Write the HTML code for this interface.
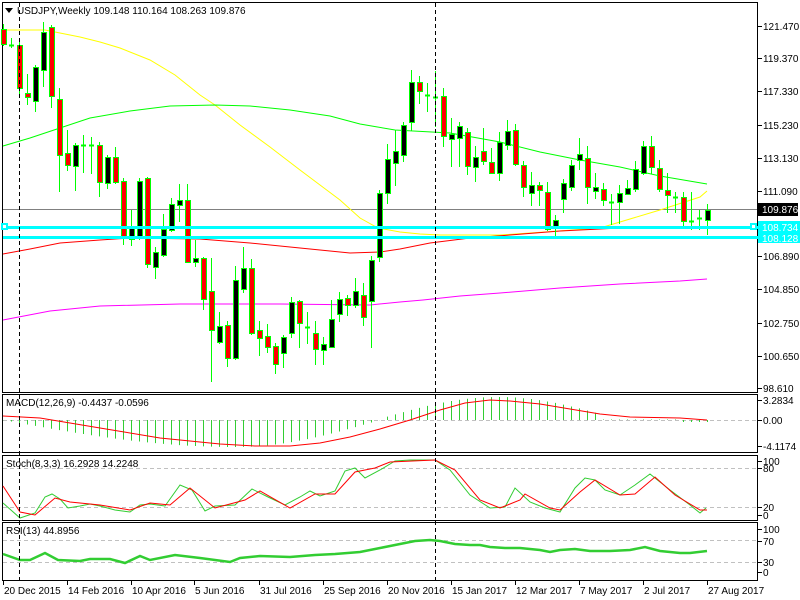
<!DOCTYPE html>
<html><head><meta charset="utf-8"><style>
body{margin:0;background:#fff;width:800px;height:600px;overflow:hidden}
svg{display:block;font-family:"Liberation Sans",sans-serif;font-size:10px}
</style></head><body>
<svg id="s" width="800" height="600" xmlns="http://www.w3.org/2000/svg">
<rect width="800" height="600" fill="#fff"/>
<g fill="none" stroke="#000" stroke-width="1">
<rect x="2.5" y="2.5" width="755" height="390"/>
<rect x="2.5" y="394.5" width="755" height="58"/>
<rect x="2.5" y="455.5" width="755" height="65"/>
<rect x="2.5" y="522.5" width="755" height="58"/>
</g>
<g id="g"></g>
<path d="M5 8h8l-4 5z" fill="#000"/>
<text x="17" y="14">USDJPY,Weekly  109.148 110.164 108.263 109.876</text>
<text x="6" y="406">MACD(12,26,9) -0.4437 -0.0596</text>
<text x="6" y="467">Stoch(8,3,3) 16.2928 14.2248</text>
<text x="6" y="534">RSI(13) 44.8956</text>
<g id="ax"></g>
<rect x="758" y="203" width="40" height="13" fill="#000"/>
<text x="762" y="213" fill="#fff">109.876</text>
<rect x="758" y="221" width="42" height="11" fill="#00ffff"/>
<rect x="758" y="232" width="42" height="11" fill="#00ffff"/>
<text x="762" y="231" fill="#fff">108.734</text>
<text x="762" y="242" fill="#fff">108.128</text>
</svg>
<script>
const NS="http://www.w3.org/2000/svg",g=document.getElementById('g'),ax=document.getElementById('ax');
function el(p,t,a,txt){const e=document.createElementNS(NS,t);for(const k in a)e.setAttribute(k,a[k]);if(txt)e.textContent=txt;p.appendChild(e);return e;}
function pl(pts,c,w,d){el(g,'polyline',{points:pts.map(p=>p.join(',')).join(' '),fill:'none',stroke:c,'stroke-width':w||1,'stroke-dasharray':d||''});}
pl([[3,209.5],[757,209.5]],'#808080',1);
[[420.5],[468.5],[507.5],[540.5],[562.5]].forEach(y=>pl([[3,y[0]],[757,y[0]]],'#c0c0c0',1,'4,3'));
pl([[3,30],[45,30],[55,32],[80,37],[100,42],[120,48],[150,60],[175,75],[200,95],[215,105],[240,125],[270,147],[300,170],[320,185],[340,200],[360,218],[378,228],[400,232],[420,234],[440,235],[500,235],[545,232],[600,228],[620,222],[660,210],[700,197],[707,191]],'#ffff00',1);
pl([[3,146],[30,138],[60,128],[90,118],[130,111],[170,106],[215,105],[250,106],[290,110],[330,116],[360,124],[395,130],[450,133],[500,142],[540,152],[580,160],[620,167],[660,176],[707,184]],'#00ff00',1);
pl([[3,254],[30,249],[60,243],[100,240],[130,238],[200,239],[250,243],[300,248],[350,253],[380,252],[400,249],[430,243],[470,238],[510,235],[560,231],[620,228],[640,227]],'#ff0000',1);
pl([[672,227],[706,227]],'#ff0000',1);
pl([[3,320],[50,311],[100,306],[180,304],[280,304],[370,305],[400,302],[423,300],[460,296],[500,293],[560,288],[620,284],[680,281],[707,279]],'#ff00ff',1);
const C=[[29,44,24,46,1],[45,47,38,48,0],[45,88,40,95,1],[93,97,74,105,1],[67,101,65,112,0],[32,70,22,87,0],[27,96,25,108,1],[99,155,88,192,1],[153,165,130,171,1],[145,166,143,191,0],[145,146,135,173,0],[145,147,137,174,1],[145,182,142,197,1],[157,183,155,189,0],[157,182,147,184,1],[181,236,178,245,1],[228,239,210,246,0],[181,236,178,240,0],[178,264,177,268,1],[252,267,247,279,0],[229,255,214,257,0],[204,230,198,232,0],[200,205,184,222,0],[200,262,184,263,1],[258,262,240,267,0],
[258,299,257,310,1],[291,330,258,382,1],[326,342,312,344,0],[325,358,321,367,1],[280,358,266,360,0],[268,289,247,293,0],[268,333,259,335,1],[330,338,321,356,1],[336,347,324,353,1],[346,364,343,374,1],[337,353,335,368,0],[302,333,297,338,0],[301,323,300,348,1],[327,329,312,344,1],[333,349,321,365,1],[344,350,337,365,0],[319,347,300,348,0],[299,314,292,322,0],[298,305,295,316,1],[291,305,278,308,0],[295,317,283,326,1],[260,301,256,348,0],
[193,257,190,262,0],[159,193,144,204,0],[151,163,130,186,0],[125,155,122,162,0],[82,122,70,131,0],[82,91,76,104,1],[95,96,83,112,0],[97,99,71,127,0],[96,136,88,147,1],[134,139,118,167,0],[126,138,122,167,0],[132,166,128,175,1],[157,167,146,182,0],[151,161,128,165,1],[162,173,148,174,1],[142,173,132,181,0],[131,145,120,150,0],[130,164,124,166,1],[165,187,161,197,1],[185,193,172,206,0],[185,190,182,206,1],[192,229,182,231,1],[220,228,215,237,0],
[183,199,179,213,0],[165,187,160,191,0],[154,160,138,170,0],[158,187,146,204,1],[187,191,173,199,0],[189,200,183,206,1],[202,203,194,225,0],[193,202,185,224,0],[188,194,180,195,0],[169,189,161,192,0],[146,173,141,175,0],[146,167,136,174,1],[168,189,160,192,1],[190,195,173,213,1],[197,198,192,213,0],[197,221,192,229,1],[221,222,192,230,0],[218,219,210,230,0],[210,220,204,235,0]];
C.forEach((c,i)=>{const x=3+8*i;
el(g,'line',{x1:x+.5,x2:x+.5,y1:c[2],y2:c[3],stroke:'#00ff00'});
const h=Math.max(c[1]-c[0],1);
if(h<=2) el(g,'line',{x1:x-2,x2:x+3,y1:c[0]+.5,y2:c[0]+.5,stroke:'#00ff00','stroke-width':2});
else el(g,'rect',{x:x-1.5,y:c[0]+.5,width:5,height:h,fill:c[4]?'#ff0000':'#000',stroke:'#00ff00'});});
[227,237].forEach(y=>el(g,'rect',{x:3,y:y-1,width:755,height:3,fill:'#00ffff'}));
el(g,'rect',{x:2,y:224,width:5,height:5,fill:'#fff',stroke:'#00ffff','stroke-width':2});
el(g,'rect',{x:751,y:224,width:5,height:5,fill:'#fff',stroke:'#00ffff','stroke-width':2});
function hist(x){
 if(x<380){return 420+ (x<235? 27*Math.sin(Math.PI/2*(x-3)/232): 27*Math.cos(Math.PI/2*(x-235)/145));}
 if(x<600){return 420-23*Math.sin(Math.PI*(x-380)/220*0.9+0.05);}
 if(x<680)return 420-0.5; return 422;}
for(let i=0;i<89;i++){const x=3+8*i+.5;const y=hist(x);el(g,'line',{x1:x,x2:x,y1:420,y2:y,stroke:'#32cd32'});}
pl([[3,416],[40,418],[100,428],[160,438],[220,444],[255,446],[290,446],[320,443],[350,437],[380,429],[410,420],[440,410],[465,403],[490,400],[510,401],[540,404],[570,409],[600,414],[630,417],[680,418],[707,420]],'#ff0000',1);
pl([[3,503],[20,518],[35,513],[45,497],[52,494],[60,499],[68,508],[80,506],[90,504],[100,506],[115,510],[130,512],[140,505],[150,504],[165,506],[180,485],[192,490],[205,511],[215,506],[235,505],[252,489],[268,497],[285,505],[300,497],[310,491],[320,496],[335,491],[345,471],[355,468],[365,478],[380,470],[395,461],[410,460],[435,460],[450,470],[470,495],[490,508],[505,507],[515,488],[530,502],[545,508],[560,512],[575,488],[585,478],[595,480],[605,490],[620,495],[635,485],[650,474],[670,490],[690,505],[700,513],[706,508]],'#32cd32',1);
pl([[3,486],[20,512],[35,515],[55,498],[70,502],[100,505],[130,510],[150,503],[170,505],[190,488],[215,508],[245,500],[260,491],[290,508],[315,494],[335,494],[355,472],[375,468],[390,462],[435,460],[455,470],[480,500],[500,508],[520,500],[525,494],[550,508],[560,510],[580,492],[595,480],[620,495],[635,494],[655,477],[675,495],[700,510],[707,510]],'#ff0000',1);
pl([[3,554],[20,560],[30,560],[45,553],[58,560],[80,561],[90,559],[110,559],[125,563],[140,556],[150,560],[175,555],[200,558],[230,562],[240,558],[260,556],[290,557],[315,555],[335,554],[360,552],[380,548],[400,544],[415,541],[430,540],[440,541],[455,544],[470,545],[480,545],[490,547],[505,548],[520,548],[540,550],[550,552],[560,550],[575,549],[590,551],[610,551],[630,550],[645,547],[660,551],[680,553],[690,553],[707,551]],'#32cd32',2.5);
[19.5,435.5].forEach(x=>pl([[x,3],[x,580]],'#000',1,'4,3'));
[[121.470,26],[119.370,58],[117.330,91],[115.230,125],[113.130,158],[111.090,191],[106.890,256],[104.850,289],[102.750,323],[100.650,356],[98.610,388]].forEach(a=>{
 el(ax,'line',{x1:758,x2:762,y1:a[1]+.5,y2:a[1]+.5,stroke:'#000'});
 el(ax,'text',{x:763,y:a[1]+4},a[0].toFixed(3));});
[['3.2834',400],['0.00',420],['-4.1174',446],['100',461],['80',468],['20',507],['0',515],['100',529],['70',541],['30',562],['0',572]].forEach(a=>{
 el(ax,'line',{x1:758,x2:762,y1:a[1]+.5,y2:a[1]+.5,stroke:'#000'});
 el(ax,'text',{x:763,y:a[1]+4},a[0]);});
[['20 Dec 2015',3],['14 Feb 2016',67],['10 Apr 2016',131],['5 Jun 2016',194],['31 Jul 2016',259],['25 Sep 2016',323],['20 Nov 2016',387],['15 Jan 2017',451],['12 Mar 2017',515],['7 May 2017',579],['2 Jul 2017',643],['27 Aug 2017',707]].forEach(a=>{
 el(ax,'line',{x1:a[1]+.5,x2:a[1]+.5,y1:581,y2:585,stroke:'#000'});
 el(ax,'text',{x:a[1]+1,y:594},a[0]);});
</script>
</body></html>
